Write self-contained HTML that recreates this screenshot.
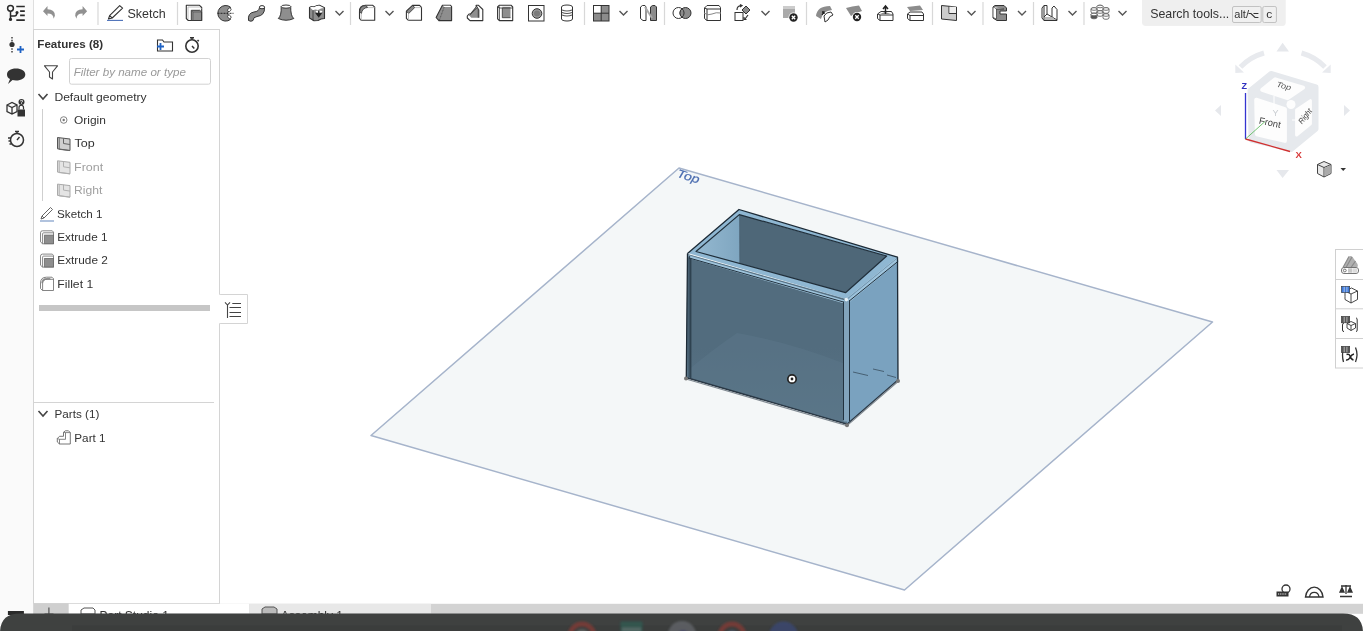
<!DOCTYPE html><html><head><meta charset="utf-8"><style>
html,body{margin:0;padding:0;width:1363px;height:631px;overflow:hidden;background:#fff;}
svg{position:absolute;left:0;top:0;}
text{font-family:"Liberation Sans", sans-serif;}
svg{will-change:transform;}
</style></head><body>
<svg width="1363" height="631" viewBox="0 0 1363 631">
<polygon points="679,168 1212.5,322 904.5,590 371,435.5" fill="#f4f7f8" stroke="#a6b4cb" stroke-width="1.5" stroke-linejoin="round"/>
<text x="0" y="0" transform="translate(676.3,176.8) rotate(17)" font-size="11.5" font-style="italic" fill="#4a6cb0" stroke="#4a6cb0" stroke-width="0.2" textLength="23" lengthAdjust="spacingAndGlyphs">Top</text>
<defs><linearGradient id="fg" x1="0" y1="0" x2="0" y2="1"><stop offset="0" stop-color="#526c7e"/><stop offset="0.55" stop-color="#526c7e"/><stop offset="1" stop-color="#5a7588"/></linearGradient><linearGradient id="ig" x1="0" y1="0" x2="1" y2="0"><stop offset="0" stop-color="#94b8d0"/><stop offset="1" stop-color="#7fa6c0"/></linearGradient></defs>
<polygon points="739.3,214.6 886.7,256.0 845.5,292.7 696.0,251.5" fill="#4e6778"/>
<polygon points="696.0,251.5 739.3,214.6 739.5,265.0" fill="url(#ig)"/>
<line x1="739.6" y1="215" x2="739.8" y2="266" stroke="#41586a" stroke-width="1.2" opacity="0.3"/>
<polygon points="687.5,254.0 846.1,299.0 847.0,424.2 686.0,377.5" fill="url(#fg)"/>
<path d="M687,371 Q712,350 737,333 Q790,342 845.5,364 L846.5,424 L686,377.5 Z" fill="#5b7689" opacity="0.55"/>
<polygon points="846.1,299.0 897.5,257.2 898.0,258.0 898.0,380.0 847.0,424.2" fill="#7aa2bf"/>
<path d="M687.7,253.0 L739.0,209.5 L897.5,257.2 L846.1,299.0 Z M696.0,251.5 L739.3,214.6 L886.7,256.0 L845.5,292.7 Z" fill="#8fb7d2" fill-rule="evenodd"/>
<path d="M688,256.5 L846.5,302.5 L897.8,260" fill="none" stroke="#9fc4dc" stroke-width="3.2" stroke-linejoin="round"/>
<path d="M846.5,301 V421.5" fill="none" stroke="#82a4bc" stroke-width="5.5"/>
<path d="M689.3,256 V377" fill="none" stroke="#3c5262" stroke-width="1.6"/>
<path d="M687.5,253.5 L739,209.5 L897.5,257.2 L898,380 M687.5,253.5 L686.3,377.5" fill="none" stroke="#1c2a36" stroke-width="1.3" stroke-linejoin="round"/>
<path d="M688.5,257.8 L843.5,302 M849.5,300.8 L897.8,261.5 M843.5,301.5 V420 M849.5,300 V421 M690.8,258.5 V378" fill="none" stroke="#22323f" stroke-width="1"/>
<path d="M696.0,251.5 L739.3,214.6 L886.7,256.0 L845.5,292.7 Z" fill="none" stroke="#1f2e3a" stroke-width="1.2" stroke-linejoin="round"/>
<path d="M688,255 L846.3,299.5 L897.3,258" fill="none" stroke="#5f7f95" stroke-width="0.6" opacity="0.6"/>
<circle cx="846.3" cy="299.6" r="1.8" fill="#e8f2f8"/>
<path d="M686,377.5 L847,424.2 L898,380" fill="none" stroke="#2a3845" stroke-width="1.5"/>
<path d="M686,379 L847,425.7 L898,381.5" fill="none" stroke="#808a92" stroke-width="1.2"/>
<circle cx="686" cy="378.5" r="2" fill="#777"/>
<circle cx="847" cy="425.2" r="2" fill="#777"/>
<circle cx="898" cy="381" r="2" fill="#777"/>
<path d="M853,372 L868,375.5 M873,369 L884,371.5 M887,375 L896,377.5" stroke="#41586a" stroke-width="0.9"/>
<circle cx="792" cy="379" r="4.2" fill="#fff" stroke="#222" stroke-width="1.7"/><circle cx="792" cy="379" r="1.4" fill="#222"/>
<rect x="0" y="0" width="33" height="631" fill="#fafafa"/><line x1="33.5" y1="0" x2="33.5" y2="631" stroke="#dfdfdf"/>
<rect x="34" y="0" width="1329" height="29" fill="#fff"/>
<rect x="33.5" y="29.5" width="186" height="574" fill="#fff" stroke="#d4d4d4"/>
<text x="37.3" y="47.5" font-size="11" fill="#333" font-weight="bold" font-style="normal" textLength="65.9" lengthAdjust="spacingAndGlyphs">Features (8)</text>
<rect x="69.5" y="58.5" width="141" height="25.7" rx="2" fill="#fff" stroke="#d2d2d2"/>
<text x="73.7" y="75.8" font-size="11" fill="#9a9a9a" font-weight="normal" font-style="italic" textLength="112.2" lengthAdjust="spacingAndGlyphs">Filter by name or type</text>
<text x="54.4" y="101.1" font-size="11" fill="#333" font-weight="normal" font-style="normal" textLength="92.2" lengthAdjust="spacingAndGlyphs">Default geometry</text>
<text x="74.1" y="123.7" font-size="11" fill="#333" font-weight="normal" font-style="normal" textLength="31.8" lengthAdjust="spacingAndGlyphs">Origin</text>
<text x="74.6" y="147.1" font-size="11" fill="#333" font-weight="normal" font-style="normal" textLength="20.2" lengthAdjust="spacingAndGlyphs">Top</text>
<text x="74.0" y="170.5" font-size="11" fill="#a0a0a0" font-weight="normal" font-style="normal" textLength="29.2" lengthAdjust="spacingAndGlyphs">Front</text>
<text x="74.0" y="193.9" font-size="11" fill="#a0a0a0" font-weight="normal" font-style="normal" textLength="28.3" lengthAdjust="spacingAndGlyphs">Right</text>
<text x="57.1" y="217.5" font-size="11" fill="#333" font-weight="normal" font-style="normal" textLength="45.3" lengthAdjust="spacingAndGlyphs">Sketch 1</text>
<text x="57.2" y="240.8" font-size="11" fill="#333" font-weight="normal" font-style="normal" textLength="50.3" lengthAdjust="spacingAndGlyphs">Extrude 1</text>
<text x="57.3" y="263.9" font-size="11" fill="#333" font-weight="normal" font-style="normal" textLength="50.5" lengthAdjust="spacingAndGlyphs">Extrude 2</text>
<text x="57.3" y="287.5" font-size="11" fill="#333" font-weight="normal" font-style="normal" textLength="35.9" lengthAdjust="spacingAndGlyphs">Fillet 1</text>
<text x="54.5" y="417.6" font-size="11" fill="#333" font-weight="normal" font-style="normal" textLength="44.8" lengthAdjust="spacingAndGlyphs">Parts (1)</text>
<text x="74.3" y="441.6" font-size="11" fill="#333" font-weight="normal" font-style="normal" textLength="31.3" lengthAdjust="spacingAndGlyphs">Part 1</text>
<line x1="42.5" y1="109" x2="42.5" y2="201" stroke="#cfcfcf"/>
<rect x="39" y="305" width="171" height="6" fill="#c6c6c6"/>
<line x1="34" y1="402.5" x2="214" y2="402.5" stroke="#d4d4d4"/>
<path d="M219.5,294.5 H247.5 V323.5 H219.5" fill="#fff" stroke="#d4d4d4"/>
<rect x="34" y="603.8" width="1329" height="10" fill="#d3d3d3"/>
<rect x="33.5" y="603.8" width="35.2" height="10" fill="#cfcfcf"/>
<rect x="68.7" y="603.8" width="180.7" height="10" fill="#fff"/>
<rect x="249.4" y="603.8" width="181.6" height="10" fill="#e8e8e8"/>
<rect x="7.9" y="611" width="16" height="4" fill="#2a2a2a"/>
<path d="M48.9,607.5 V620 M44.5,614 H53.5" stroke="#555" stroke-width="1.2"/>
<path d="M81,610 L84,608 H93 L95,610 V614 H81 Z" fill="#fff" stroke="#555"/>
<text x="99.5" y="620" font-size="12" fill="#333">Part Studio 1</text>
<path d="M262,609 L265,607 H274 L277,609 V614 H262 Z" fill="#bbb" stroke="#555"/>
<text x="281" y="620" font-size="12" fill="#333">Assembly 1</text>
<path d="M0,631 V633 Q0,613.6 20,613.6 H1343 Q1363,613.6 1363,633 V631 Z" fill="#3f4140"/>
<rect x="72" y="625.5" width="1270" height="6" fill="#3b3d3c"/>
<defs><filter id="bl" x="-20%" y="-20%" width="140%" height="140%"><feGaussianBlur stdDeviation="1.2"/></filter></defs><g filter="url(#bl)" opacity="0.7">
<circle cx="582" cy="636" r="12" fill="none" stroke="#8a3b35" stroke-width="5"/><circle cx="582" cy="636" r="7" fill="#6a6c6b"/>
<rect x="620.5" y="621.5" width="22" height="12" fill="#2d5f55"/><rect x="622" y="627.5" width="19" height="4" fill="#5f7a76"/>
<circle cx="682" cy="635" r="14" fill="#676a70"/><circle cx="683" cy="636" r="6" fill="#4a4a78"/>
<circle cx="732" cy="636" r="12" fill="none" stroke="#8a3b35" stroke-width="5"/><circle cx="732" cy="636" r="6" fill="#55607a"/>
<circle cx="783.5" cy="636" r="14.5" fill="#3a4a7a"/>
</g>
<path d="M43,11.3 L47.5,6 V9.3 Q55,9.3 54.9,15.8 L53.6,18.8 Q53.5,13.4 47.5,13.4 V15.9 Z" fill="#919191"/>
<path d="M87.1,11.3 L82.6,6 V9.3 Q75.1,9.3 75.2,15.8 L76.5,18.8 Q76.6,13.4 82.6,13.4 V15.9 Z" fill="#919191"/>
<line x1="98" y1="2" x2="98" y2="25" stroke="#d8d8d8" stroke-width="1.2"/>
<path d="M108.5,19 L109.6,15.6 L119.7,5.6 L122.6,8.1 L112.2,18 Z M109.6,15.6 L112.2,18" fill="none" stroke="#333" stroke-width="1.1" stroke-linejoin="round"/>
<line x1="107" y1="20.4" x2="123" y2="20.4" stroke="#4a6fb8" stroke-width="1.1"/>
<text x="127.4" y="17.6" font-size="13.5" fill="#333" font-weight="normal" font-style="normal" textLength="38.2" lengthAdjust="spacingAndGlyphs">Sketch</text>
<line x1="177.5" y1="2" x2="177.5" y2="25" stroke="#d8d8d8" stroke-width="1.2"/>
<path d="M186.3,5.3 H199.5 L201.7,7.5 V20.5 H188.3 L186.3,18.5 Z" fill="#fff" stroke="#333" stroke-width="1.1" stroke-linejoin="round"/>
<path d="M188,7 H199.5 L201.5,8.5 M188,7 V19" stroke="#bbb" stroke-width="0.9" fill="none"/>
<path d="M191.3,10.3 H199.8 L201.6,12 V20.5 H191.3 Z" fill="#8e8e8e" stroke="#333" stroke-width="0.9"/>
<path d="M191.6,10.6 L193,12 H201.5 M193,12 V20.3" stroke="#555" stroke-width="0.7" fill="none"/>
<path d="M230.5,7.2 A7.8,7.8 0 1 0 230.5,19.4 L227.5,13.3 Z" fill="#8e8e8e" stroke="#333" stroke-width="1"/>
<ellipse cx="229.3" cy="9.8" rx="1.5" ry="2" transform="rotate(40 229.3 9.8)" fill="#fff" stroke="#333" stroke-width="0.8"/>
<ellipse cx="229.3" cy="16.8" rx="1.5" ry="2" transform="rotate(-40 229.3 16.8)" fill="#fff" stroke="#333" stroke-width="0.8"/>
<line x1="217.5" y1="13.3" x2="233.5" y2="13.3" stroke="#222" stroke-width="1" stroke-dasharray="2,1"/>
<path d="M248.5,20.5 Q247.5,13 254,12 Q259,11.5 259.5,7.5 L264.5,7.5 Q265,15.5 257,16.5 Q253,17 253,20.5 Q251,22 248.5,20.5 Z" fill="#8c8c8c" stroke="#333"/>
<ellipse cx="262" cy="7.2" rx="2.6" ry="1.6" fill="#fff" stroke="#333"/>
<path d="M281.2,6.5 Q281.5,16 278.3,18.5 Q286,22 293.8,18.5 Q290.5,16 290.7,6.5 Z" fill="#8e8e8e" stroke="#333" stroke-width="1"/>
<ellipse cx="286" cy="6.6" rx="4.8" ry="1.6" fill="#fff" stroke="#333" stroke-width="1"/>
<path d="M309.5,7.5 Q312,6 314,7 Q317,5 319.5,5.3 L324.5,7.8 V18.5 Q321,18.5 318,20.5 L314,20.7 L309.5,18 Z" fill="#8e8e8e" stroke="#333" stroke-width="1.1" stroke-linejoin="round"/>
<path d="M310,7.6 Q312,6.3 314,7.2 Q317,5.5 319.5,5.8 L324,8 Q321,8.2 318,10 Q315,9 313,10.3 Z" fill="#fff"/>
<path d="M313,10.3 V20.5" stroke="#333" stroke-width="0.8"/>
<path d="M315.5,11 L319,10.5 L322.5,11 L319,17 Z" fill="#fff"/>
<path d="M318.8,10.5 V14.5 M316.5,13.5 L318.8,16.5 L321,13.5 Z" stroke="#222" stroke-width="1.4" fill="#222"/>
<path d="M335.5,11 L339.5,15 L343.5,11" fill="none" stroke="#555" stroke-width="1.4"/>
<line x1="350.5" y1="2" x2="350.5" y2="25" stroke="#d8d8d8" stroke-width="1.2"/>
<path d="M359.5,18.3 V11.5 Q359.5,5.3 365.5,5.3 H372.8 L374.7,7.2 V20.3 H361.3 Z" fill="#fff" stroke="#333" stroke-width="1.1" stroke-linejoin="round"/>
<path d="M359.8,11.5 Q360,5.6 365.5,5.6 L367.8,7.4 Q362,8 361.4,13.6 Z" fill="#8a8a8a" stroke="#333" stroke-width="0.8"/>
<path d="M361.3,20.3 V13.6 M367.8,7.6 H374.5" stroke="#bbb" stroke-width="0.9" fill="none"/>
<path d="M385.5,11 L389.5,15 L393.5,11" fill="none" stroke="#555" stroke-width="1.4"/>
<path d="M406.4,18.4 V11.2 L412.5,5.4 H419.6 L421.5,7.3 V20.3 H408.4 Z" fill="#fff" stroke="#333" stroke-width="1.1" stroke-linejoin="round"/>
<path d="M406.6,11.2 L412.5,5.6 L414.8,7.5 L408.6,13.6 Z" fill="#8a8a8a" stroke="#333" stroke-width="0.8"/>
<path d="M408.5,20.3 V13.6 M414.8,7.6 H421.3" stroke="#bbb" stroke-width="0.9" fill="none"/>
<path d="M436.1,17.5 L442.4,5.2 H450.3 L451.6,6.7 V20.6 H438.9 Z" fill="#8e8e8e" stroke="#333" stroke-width="1.1" stroke-linejoin="round"/>
<path d="M442.8,5.7 H450.2 L451.2,6.9 H444.3 Z" fill="#fff"/>
<path d="M444.2,7 L439.3,20.4" stroke="#444" stroke-width="0.8" stroke-dasharray="1,0.6"/>
<path d="M467.3,16 L469,14 H470.5 L476.2,7 V5.2 H478.3 L482.8,9.5 V20.6 H470 L467.3,18 Z" fill="#fff" stroke="#333" stroke-width="1.1" stroke-linejoin="round"/>
<path d="M469.3,15.5 L477.2,7.5 L479.6,9.8 V17.7 H471.3 Z" fill="#8e8e8e"/>
<path d="M469.3,15.5 L477.2,7.5 M476.2,5.5 L478.3,9 V17.7" stroke="#333" stroke-width="0.9" fill="none"/>
<path d="M497.6,7 L499.4,5.2 H511 L512.7,7 V20.6 H499.4 L497.6,18.8 Z" fill="#fff" stroke="#333" stroke-width="1.1" stroke-linejoin="round"/>
<path d="M502.3,6.8 H510.5 V17.7 H502.3 Z" fill="#8e8e8e"/>
<path d="M499.4,6.5 V20.6 M497.6,7 L499.4,8 H512.7 M502.3,8 V17.7 H510.5" stroke="#333" stroke-width="0.8" fill="none"/>
<rect x="528.5" y="5.5" width="15.5" height="15.5" fill="#fff" stroke="#333"/>
<circle cx="537" cy="13.5" r="4.8" fill="#999" stroke="#333"/>
<circle cx="537" cy="13.5" r="3" fill="#7a7a7a"/>
<path d="M561.5,7 V19 A5.5,2 0 0 0 572.5,19 V7 A5.5,2 0 0 0 561.5,7 Z" fill="#fff" stroke="#333"/>
<path d="M562,10 Q567,12 572,10 M562,12.5 Q567,14.5 572,12.5 M562,15 Q567,17 572,15" stroke="#555" stroke-width="1.2" fill="none"/>
<line x1="584.5" y1="2" x2="584.5" y2="25" stroke="#d8d8d8" stroke-width="1.2"/>
<rect x="593.5" y="5.5" width="15.5" height="15.5" fill="#8c8c8c" stroke="#333"/>
<rect x="594" y="6" width="7" height="7" fill="#fff"/>
<path d="M601.2,5.5 V21 M593.5,13.2 H609" stroke="#333"/>
<path d="M619.5,11 L623.5,15 L627.5,11" fill="none" stroke="#555" stroke-width="1.4"/>
<path d="M640.5,7 L642.5,5.5 H645 L646,7 V20.5 H643 L640.5,18.5 Z" fill="#fff" stroke="#333"/>
<path d="M650.5,7 L652.5,5.5 H655 L656.5,7 V20.5 H650.5 Z" fill="#8c8c8c" stroke="#333"/>
<path d="M645,7 L652,18" stroke="#aaa" stroke-width="2"/>
<line x1="664.5" y1="2" x2="664.5" y2="25" stroke="#d8d8d8" stroke-width="1.2"/>
<circle cx="678.5" cy="13" r="5.5" fill="#fff" stroke="#333"/>
<circle cx="685.5" cy="13" r="5.5" fill="#8c8c8c" stroke="#333"/>
<path d="M682,8.7 A5.5,5.5 0 0 1 682,17.3 A5.5,5.5 0 0 1 682,8.7" fill="#8c8c8c" stroke="#333"/>
<path d="M704.5,8 L707,5.5 H719 L720.5,7.5 V20.5 H707 L704.5,18.5 Z" fill="#fff" stroke="#333"/>
<path d="M704.5,8 L707,9 H720.5 M707,9 V20.5" stroke="#333" fill="none"/>
<path d="M704,13 Q708,16 712,14 Q716,12 721,13" stroke="#888" fill="none"/>
<rect x="735" y="12.5" width="8" height="8" fill="#fff" stroke="#333"/>
<path d="M746,6 L750,10 L746,14 L742,10 Z" fill="#8c8c8c" stroke="#333"/>
<path d="M737,10 Q737,6 741,5.5 M740,4.5 L742,5.5 L740,7 M748,15 L745,19 M744,17 V19.5 H746.5" stroke="#333" stroke-width="1.2" fill="none"/>
<path d="M761.5,11 L765.5,15 L769.5,11" fill="none" stroke="#555" stroke-width="1.4"/>
<rect x="783" y="6" width="12" height="12" fill="#aaa"/>
<rect x="783" y="6" width="12" height="3" fill="#ccc"/>
<circle cx="793.5" cy="17.5" r="5" fill="#fff"/><circle cx="793.5" cy="17.5" r="4.2" fill="#222"/>
<path d="M791.8,15.8 L795.2,19.2 M795.2,15.8 L791.8,19.2" stroke="#fff" stroke-width="1.3"/>
<line x1="806.5" y1="2" x2="806.5" y2="25" stroke="#d8d8d8" stroke-width="1.2"/>
<path d="M816,16 Q817,6 830,6 L832,10 Q822,11 821,19 Z" fill="#8c8c8c"/>
<path d="M824,16 Q826,12 831,12 L833,15 Q829,16 828,20 L825,22 Z" fill="#fff" stroke="#333"/>
<path d="M822,15 L824,12 M822,12 H824 V14" stroke="#222" stroke-width="1.3" fill="none"/>
<path d="M846,8 Q852,6 859,5.5 L862,11 Q855,13 851,16 Z" fill="#8c8c8c"/>
<circle cx="857" cy="17" r="5" fill="#fff"/><circle cx="857" cy="17" r="4.2" fill="#222"/>
<path d="M855.3,15.3 L858.7,18.7 M858.7,15.3 L855.3,18.7" stroke="#fff" stroke-width="1.3"/>
<path d="M877.5,14 L881,11.5 H891.5 L893,14 V20.5 H880 L877.5,18.5 Z" fill="#fff" stroke="#333"/>
<path d="M878,14 L880,15 H893 M880,15 V20.5" stroke="#333" fill="none"/>
<path d="M880,14 L885,12 L891,14" fill="#8c8c8c"/>
<path d="M885.5,14 V7 M883,9 L885.5,6 L888,9" stroke="#222" stroke-width="1.5" fill="none"/>
<path d="M907,7 L920,5.5 L923,10 L910,11 Z" fill="#8c8c8c"/>
<path d="M907.5,14 L910,12 H922 L923.5,14 V20.5 H910 L907.5,18.5 Z" fill="#fff" stroke="#333"/>
<path d="M907.5,14 L910,15.5 H923.5 M910,15.5 V20.5" stroke="#333" fill="none"/>
<line x1="932.5" y1="2" x2="932.5" y2="25" stroke="#d8d8d8" stroke-width="1.2"/>
<path d="M941.5,5.5 L956.5,7 V20.5 L941.5,19 Z" fill="#ccc" stroke="#333"/>
<path d="M949,6.3 V13.5 H956.5" stroke="#333" fill="none"/>
<path d="M949.5,6.8 H956 V13 H949.5 Z" fill="#eee"/>
<path d="M967.5,11 L971.5,15 L975.5,11" fill="none" stroke="#555" stroke-width="1.4"/>
<line x1="983" y1="2" x2="983" y2="25" stroke="#d8d8d8" stroke-width="1.2"/>
<path d="M993,7 L995,5.5 H1004 L1006.5,8 V11 H1000 V14 H1006.5 V20.5 H997 L993,18 Z" fill="#8c8c8c" stroke="#333"/>
<path d="M993,7 L996,9 H1004 M996,9 V19" stroke="#333" fill="#fff"/>
<path d="M993.5,7.3 L996,9 V18.5 L993.5,17 Z" fill="#fff"/>
<path d="M1018,11 L1022,15 L1026,11" fill="none" stroke="#555" stroke-width="1.4"/>
<line x1="1033.5" y1="2" x2="1033.5" y2="25" stroke="#d8d8d8" stroke-width="1.2"/>
<path d="M1042,8 L1044,5.5 H1047 V14 L1052,17 V8 L1054,6 L1057,9.5 V20.5 H1044 L1042,18 Z" fill="#fff" stroke="#333"/>
<path d="M1044,5.5 V20.5 M1047,14 L1044,17 M1052,17 L1057,20" stroke="#333" fill="none"/>
<path d="M1045,17 L1052,17 L1056,20 H1045Z" fill="#bbb"/>
<path d="M1068.5,11 L1072.5,15 L1076.5,11" fill="none" stroke="#555" stroke-width="1.4"/>
<line x1="1084" y1="2" x2="1084" y2="25" stroke="#d8d8d8" stroke-width="1.2"/>
<path d="M1097,6.5 V9.5 A3,1.3 0 0 0 1103,9.5 V6.5 A3,1.3 0 0 0 1097,6.5 Z" fill="#fff" stroke="#666" stroke-width="0.9"/>
<ellipse cx="1100" cy="6.5" rx="3" ry="1.3" fill="#fff" stroke="#666" stroke-width="0.9"/>
<path d="M1091,9 V12 A3,1.3 0 0 0 1097,12 V9 A3,1.3 0 0 0 1091,9 Z" fill="#fff" stroke="#666" stroke-width="0.9"/>
<ellipse cx="1094" cy="9" rx="3" ry="1.3" fill="#fff" stroke="#666" stroke-width="0.9"/>
<path d="M1103,9 V12 A3,1.3 0 0 0 1109,12 V9 A3,1.3 0 0 0 1103,9 Z" fill="#fff" stroke="#666" stroke-width="0.9"/>
<ellipse cx="1106" cy="9" rx="3" ry="1.3" fill="#fff" stroke="#666" stroke-width="0.9"/>
<path d="M1097,12 V15 A3,1.3 0 0 0 1103,15 V12 A3,1.3 0 0 0 1097,12 Z" fill="#fff" stroke="#666" stroke-width="0.9"/>
<ellipse cx="1100" cy="12" rx="3" ry="1.3" fill="#fff" stroke="#666" stroke-width="0.9"/>
<path d="M1091,14.5 V17.5 A3,1.3 0 0 0 1097,17.5 V14.5 A3,1.3 0 0 0 1091,14.5 Z" fill="#555" stroke="#666" stroke-width="0.9"/>
<ellipse cx="1094" cy="14.5" rx="3" ry="1.3" fill="#fff" stroke="#666" stroke-width="0.9"/>
<path d="M1103,15 V18 A3,1.3 0 0 0 1109,18 V15 A3,1.3 0 0 0 1103,15 Z" fill="#fff" stroke="#666" stroke-width="0.9"/>
<ellipse cx="1106" cy="15" rx="3" ry="1.3" fill="#fff" stroke="#666" stroke-width="0.9"/>
<path d="M1118.5,11 L1122.5,15 L1126.5,11" fill="none" stroke="#555" stroke-width="1.4"/>
<circle cx="10.5" cy="8.3" r="2.9" fill="none" stroke="#2a2a2a" stroke-width="1.5"/>
<path d="M10.5,11.2 V19.4 M10.5,16 H14.5 Q16.5,16 17,12.8" fill="none" stroke="#2a2a2a" stroke-width="1.5"/>
<circle cx="10.5" cy="19.4" r="1.6" fill="#2a2a2a"/><circle cx="17" cy="12.6" r="1.5" fill="#2a2a2a"/>
<path d="M16.3,6.5 H24.8 M20.1,11.1 H24.8 M20.1,15.4 H24.8 M16.3,20.1 H24.8" stroke="#2a2a2a" stroke-width="1.6"/>
<path d="M12,37 V53" stroke="#333" stroke-width="1.4" stroke-dasharray="1.6,1.2"/>
<circle cx="12" cy="44.5" r="2.6" fill="#333"/>
<path d="M17,49.5 H24 M20.5,46 V53" stroke="#1f62c4" stroke-width="1.8"/>
<path d="M16,68.5 C21.5,68.5 25.3,71 25.3,74.5 C25.3,78 21.5,80.5 16,80.5 C14.5,80.5 13.5,80.3 12.5,80 L8,84 L10,79 C8,78 7,76.5 7,74.5 C7,71 10.5,68.5 16,68.5 Z" fill="#333"/>
<path d="M7,105 L12,102.5 L17,105 V111.5 L12,114 L7,111.5 Z M7,105 L12,107.5 L17,105 M12,107.5 V114" fill="none" stroke="#333" stroke-width="1.3"/>
<rect x="17.5" y="109.5" width="7.5" height="7" fill="#333"/>
<path d="M19,109.5 V107.5 A2.2,2.2 0 0 1 23.5,107.5 V109.5" fill="none" stroke="#333" stroke-width="1.2"/>
<circle cx="21.5" cy="102" r="3" fill="#333"/>
<text x="20" y="104.3" font-size="5" fill="#fff" font-weight="bold">?</text>
<circle cx="17" cy="140" r="6.5" fill="none" stroke="#333" stroke-width="1.5"/>
<path d="M15,131.5 H19 M17,131.5 V133.5 M17,140 L19.5,137 M8,138 H11 M8.5,141 H11 M9.5,144 H11.5" stroke="#333" stroke-width="1.4" fill="none"/>
<path d="M157.5,40 H162.5 L164,42 H172.5 V51 H157.5 Z" fill="none" stroke="#333" stroke-width="1.1"/>
<path d="M157,46.5 H164 M160.5,43 V50" stroke="#1f62c4" stroke-width="1.8"/>
<circle cx="192" cy="46" r="6.2" fill="none" stroke="#333" stroke-width="1.6"/>
<path d="M190,37.8 H194 M192,37.8 V39.5 M192,46 L194.3,48.5 M197.5,40 L198.8,41.3" stroke="#333" stroke-width="1.5" fill="none"/>
<path d="M44.5,65.8 H57.5 L52.5,72 V79 L49.5,77 V72 Z" fill="none" stroke="#444" stroke-width="1.1" stroke-linejoin="round"/>
<path d="M38.5,94 L43,99 L47.5,94" fill="none" stroke="#444" stroke-width="1.6"/>
<path d="M38.5,411 L43,416 L47.5,411" fill="none" stroke="#444" stroke-width="1.6"/>
<circle cx="63.7" cy="120" r="3.3" fill="none" stroke="#777" stroke-width="0.9"/><circle cx="63.7" cy="120" r="1.2" fill="#777"/>
<path d="M57.5,137.5 L70.0,139.0 V150.5 L57.5,148.8 Z" fill="#d0d0d0" stroke="#555" stroke-width="1"/><path d="M59.2,138.0 V149.3 L70.0,150.6 M63.5,138.2 V143.5 L70.0,144.5" fill="none" stroke="#666" stroke-width="1"/>
<path d="M57.5,160.8 L70.0,162.3 V173.8 L57.5,172.1 Z" fill="#e4e4e4" stroke="#aaa" stroke-width="1"/><path d="M59.2,161.3 V172.6 L70.0,173.9 M63.5,161.5 V166.8 L70.0,167.8" fill="none" stroke="#b0b0b0" stroke-width="1"/>
<path d="M57.5,184.1 L70.0,185.6 V197.1 L57.5,195.4 Z" fill="#e4e4e4" stroke="#aaa" stroke-width="1"/><path d="M59.2,184.6 V195.9 L70.0,197.2 M63.5,184.8 V190.1 L70.0,191.1" fill="none" stroke="#b0b0b0" stroke-width="1"/>
<path d="M41,219 L42,216 L50.5,207.5 L52.5,209.5 L44,218 Z M42,216 L44,218" fill="none" stroke="#555" stroke-width="0.9"/>
<line x1="40" y1="221" x2="54" y2="221" stroke="#7d9cc9" stroke-width="1.2"/>
<path d="M40.5,232.8 Q40.5,230.8 42.5,230.8 H52.3 L53.5,232.1 V243.8 H42.6 L40.5,241.9 Z" fill="#fff" stroke="#7a7a7a" stroke-width="0.9"/><path d="M42.6,243.8 V233.8 Q42.6,232.8 43.6,232.8 H53.5" stroke="#7a7a7a" stroke-width="0.9" fill="none"/><rect x="44.6" y="235.1" width="9" height="8.6" fill="#8e8e8e" stroke="#6a6a6a" stroke-width="0.8"/>
<path d="M40.5,256.1 Q40.5,254.1 42.5,254.1 H52.3 L53.5,255.4 V267.1 H42.6 L40.5,265.2 Z" fill="#fff" stroke="#7a7a7a" stroke-width="0.9"/><path d="M42.6,267.1 V257.1 Q42.6,256.1 43.6,256.1 H53.5" stroke="#7a7a7a" stroke-width="0.9" fill="none"/><rect x="44.6" y="258.4" width="9" height="8.6" fill="#8e8e8e" stroke="#6a6a6a" stroke-width="0.8"/>
<path d="M40.5,283 Q40.5,277.2 46.5,277.2 H52 L53.5,278.7 V290.5 H42.5 L40.5,288.5 Z" fill="#fff" stroke="#777" stroke-width="0.9"/>
<path d="M41.3,283 Q41.5,278 46.5,278 H50 L51,279.5 H47 Q43,279.5 42.8,284 Z" fill="#999"/>
<path d="M42.6,290.5 V283.5 Q42.8,279.3 47,279.3 H53.5" fill="none" stroke="#777" stroke-width="0.9"/>
<rect x="218.5" y="294.8" width="2" height="28.4" fill="#fff"/>
<path d="M232.3,303.5 H241 M229.5,307.5 H241 M229.5,312.5 H241 M229.5,316.5 H241 M227.5,305 V318 M225,302.3 L227.5,305 L230,302.3" stroke="#444" stroke-width="1.1" fill="none"/>
<path d="M57.3,438.5 L59.5,436.3 H63.5 V432.3 L65.3,430.8 H68.5 L70.3,432.6 V444 H59.5 L57.3,442 Z" fill="#fff" stroke="#666" stroke-width="0.9" stroke-linejoin="round"/>
<path d="M57.3,438.5 L59.5,439.3 H65.5 V432.6 H70.3 M59.5,439.3 V444 M63.5,432.3 L65.5,432.6" fill="none" stroke="#666" stroke-width="0.8"/>
<g opacity="1">
<path d="M1264,53 Q1250,57 1240.5,67" fill="none" stroke="#e8eaee" stroke-width="5"/>
<path d="M1235.3,73 L1235.3,64.5 L1244,72.5 Z" fill="#e8eaee"/>
<path d="M1301.5,53 Q1315.5,57 1325,67" fill="none" stroke="#e8eaee" stroke-width="5"/>
<path d="M1330.7,73 L1330.7,64.5 L1322,72.5 Z" fill="#e8eaee"/>
<path d="M1276.5,51.5 L1282.6,42.7 L1289,51.5 Z M1215,110.5 L1221,105 V116 Z M1350,110.5 L1344,105 V116 Z M1276.5,170 L1282.6,178 L1289,170 Z" fill="#e6e8ec"/>
<polygon points="1250.0,90.5 1271.0,73.5 1316.0,87.0 1316.0,129.0 1291.0,149.5 1251.0,140.0" fill="#e6e9ed" stroke="#e6e9ed" stroke-width="5" stroke-linejoin="round"/>
<polygon points="1262.2,89.8 1275.2,79.3 1303.1,87.7 1287.6,98.2" fill="#fdfdfd" stroke="#fdfdfd" stroke-width="4" stroke-linejoin="round"/>
<polygon points="1256.2,99.7 1284.9,109.1 1284.9,140.9 1256.9,134.3" fill="#fdfdfd" stroke="#fdfdfd" stroke-width="4" stroke-linejoin="round"/>
<polygon points="1296.6,110.0 1310.4,100.7 1310.4,123.8 1296.6,135.0" fill="#fdfdfd" stroke="#fdfdfd" stroke-width="3" stroke-linejoin="round"/>
<circle cx="1291" cy="104.5" r="4.5" fill="#fdfdfd"/>
<path d="M1274,96 V112 M1292,120 H1302" stroke="#fff" stroke-width="1"/>
<text x="1272.5" y="115.5" font-size="9" fill="#c8ccd0">Y</text>
<text transform="translate(1276,86.5) rotate(15)" font-size="7.5" fill="#555" font-style="italic" textLength="15" lengthAdjust="spacingAndGlyphs">Top</text>
<text transform="translate(1258.5,123.5) rotate(12)" font-size="9.5" fill="#444" textLength="22" lengthAdjust="spacingAndGlyphs">Front</text>
<text transform="translate(1302,124.5) rotate(-52)" font-size="8" fill="#444" font-style="italic" textLength="17" lengthAdjust="spacingAndGlyphs">Right</text>
</g>
<line x1="1245.5" y1="139" x2="1245.5" y2="93" stroke="#3434d0" stroke-width="1.3"/>
<line x1="1245.5" y1="139" x2="1290" y2="151.5" stroke="#d03030" stroke-width="1.3"/>
<line x1="1245.5" y1="139" x2="1265" y2="121.5" stroke="#40b040" stroke-width="0.9" opacity="0.8"/>
<text x="1241.5" y="89" font-size="9" font-weight="bold" fill="#3030c0">Z</text>
<text x="1295.5" y="158" font-size="9.5" font-weight="bold" fill="#d83a3a">X</text>
<path d="M1317.5,164.5 L1324,161.5 L1331,164.5 V173.5 L1324,177 L1317.5,173.5 Z" fill="#e8e8e8" stroke="#444" stroke-width="1"/>
<path d="M1317.5,164.5 L1324,167.5 L1331,164.5 M1324,167.5 V177" fill="none" stroke="#444" stroke-width="1"/><path d="M1324.5,168 L1330.5,165.2 V173.2 L1324.5,176.3 Z" fill="#aaa"/>
<path d="M1340.5,168 H1346 L1343.2,171 Z" fill="#333"/>
<rect x="1335.5" y="249.5" width="30" height="118.5" fill="#fff" stroke="#d0d0d0"/>
<line x1="1336" y1="279.5" x2="1363" y2="279.5" stroke="#d0d0d0"/>
<line x1="1336" y1="308.8" x2="1363" y2="308.8" stroke="#d0d0d0"/>
<line x1="1336" y1="338.5" x2="1363" y2="338.5" stroke="#d0d0d0"/>
<path d="M1343,267.5 L1349,256.5 Q1351,255.5 1352.5,257 L1357.5,264 Q1358.5,266 1357,267.5 Z" fill="#b0b0b0"/>
<path d="M1349,256.5 L1343,267.5 M1352,257 L1346,267.5 M1355.5,261 L1351,267.5" stroke="#8a8a8a" stroke-width="1.2"/>
<rect x="1341.5" y="267.5" width="17" height="6" rx="2.5" fill="#fff" stroke="#666" stroke-width="0.9"/>
<rect x="1348" y="268.3" width="4.4" height="4.4" fill="#c8c8c8"/><rect x="1353" y="268.3" width="4.3" height="4.4" fill="#dcdcdc"/>
<circle cx="1344.8" cy="270.5" r="1.4" fill="none" stroke="#555" stroke-width="0.8"/>
<path d="M1345,296.5 V291 L1351.5,288 L1357.5,291 V299.5 L1351,303 L1345,299.5 Z M1345,291 L1351,294 L1357.5,291 M1351,294 V303" fill="#fff" stroke="#333" stroke-width="0.9" stroke-linejoin="round"/>
<rect x="1341.4" y="286.3" width="8.3" height="6.4" fill="#3d78d8" stroke="#333" stroke-width="0.6"/><path d="M1344.2,286.8 V292.3 M1346.9,286.8 V292.3" stroke="#fff" stroke-width="0.7" opacity="0.8"/>
<path d="M1347,323.5 L1351,321.5 L1355.5,323.5 V328 L1351,330.5 L1347,328 Z M1347,323.5 L1351,325.5 L1355.5,323.5 M1351,325.5 V330.5" fill="#fff" stroke="#333" stroke-width="0.9"/>
<path d="M1344,323 Q1342.5,323 1342.5,325 V330 Q1342.5,331.6 1344,331.6 M1356,317.8 Q1357.2,318 1357.2,320 V330 Q1357.2,331.6 1356,331.6" fill="none" stroke="#333" stroke-width="1"/>
<rect x="1341.4" y="316.4" width="8.3" height="6.4" fill="#555" stroke="#333" stroke-width="0.6"/><path d="M1344.2,316.9 V322.4 M1346.9,316.9 V322.4" stroke="#fff" stroke-width="0.7" opacity="0.8"/>
<path d="M1343.5,350 Q1341.5,354.5 1343.5,362 M1355.5,347.5 Q1358.5,354.5 1355.5,362" fill="none" stroke="#333" stroke-width="1.3"/>
<path d="M1346.5,354.5 Q1349,353.5 1350,356 Q1351,359.5 1353.5,360 M1354,354 Q1351.5,354.5 1350,357.5 Q1348.5,360.5 1346,360" fill="none" stroke="#222" stroke-width="1.5"/>
<rect x="1341.4" y="346.3" width="8.3" height="6.4" fill="#555" stroke="#333" stroke-width="0.6"/><path d="M1344.2,346.8 V352.3 M1346.9,346.8 V352.3" stroke="#fff" stroke-width="0.7" opacity="0.8"/>
<circle cx="1286" cy="589" r="4" fill="#fff" stroke="#333" stroke-width="1.3"/><rect x="1276.5" y="591.5" width="12" height="5" fill="#333"/><path d="M1278,594 H1287" stroke="#fff" stroke-dasharray="1.2,1"/>
<path d="M1305.5,597 A8.8,11 0 0 1 1323,597 Z" fill="none" stroke="#333" stroke-width="1.4"/><path d="M1309.5,597 A4.8,5.5 0 0 1 1319,597" fill="none" stroke="#333" stroke-width="1.3"/>
<path d="M1340,596.5 H1352 M1346,585 V594 M1341,586 H1351 M1340,592 L1342,587.5 L1344,592 Z M1348,592 L1350,587.5 L1352,592 Z" stroke="#333" stroke-width="1.3" fill="#333"/>
<rect x="1142.5" y="-3" width="143" height="29" rx="3" fill="#e6e6e6" opacity="0.6"/>
<rect x="1142" y="-3" width="143.5" height="28.2" rx="3" fill="#efefef"/>
<rect x="1232.5" y="6.5" width="28.7" height="16" rx="1.5" fill="#f0f0f0" stroke="#c2c2c2" stroke-width="1"/>
<rect x="1262.8" y="6.5" width="13.6" height="16" rx="1.5" fill="#f0f0f0" stroke="#c2c2c2" stroke-width="1"/>
<text x="1234.3" y="18" font-size="10" fill="#333" font-weight="normal" font-style="normal" textLength="14.7" lengthAdjust="spacingAndGlyphs">alt/</text>
<path d="M1248.5,13.5 H1251 L1255,17.5 H1258.4 M1253.5,13.5 H1258.4" fill="none" stroke="#333" stroke-width="1.1"/>
<text x="1266.2" y="18" font-size="10" fill="#333" font-weight="normal" font-style="normal" textLength="6.0" lengthAdjust="spacingAndGlyphs">c</text>
<text x="1150.2" y="18" font-size="13.5" fill="#333" font-weight="normal" font-style="normal" textLength="79.1" lengthAdjust="spacingAndGlyphs">Search tools...</text>
</svg></body></html>
